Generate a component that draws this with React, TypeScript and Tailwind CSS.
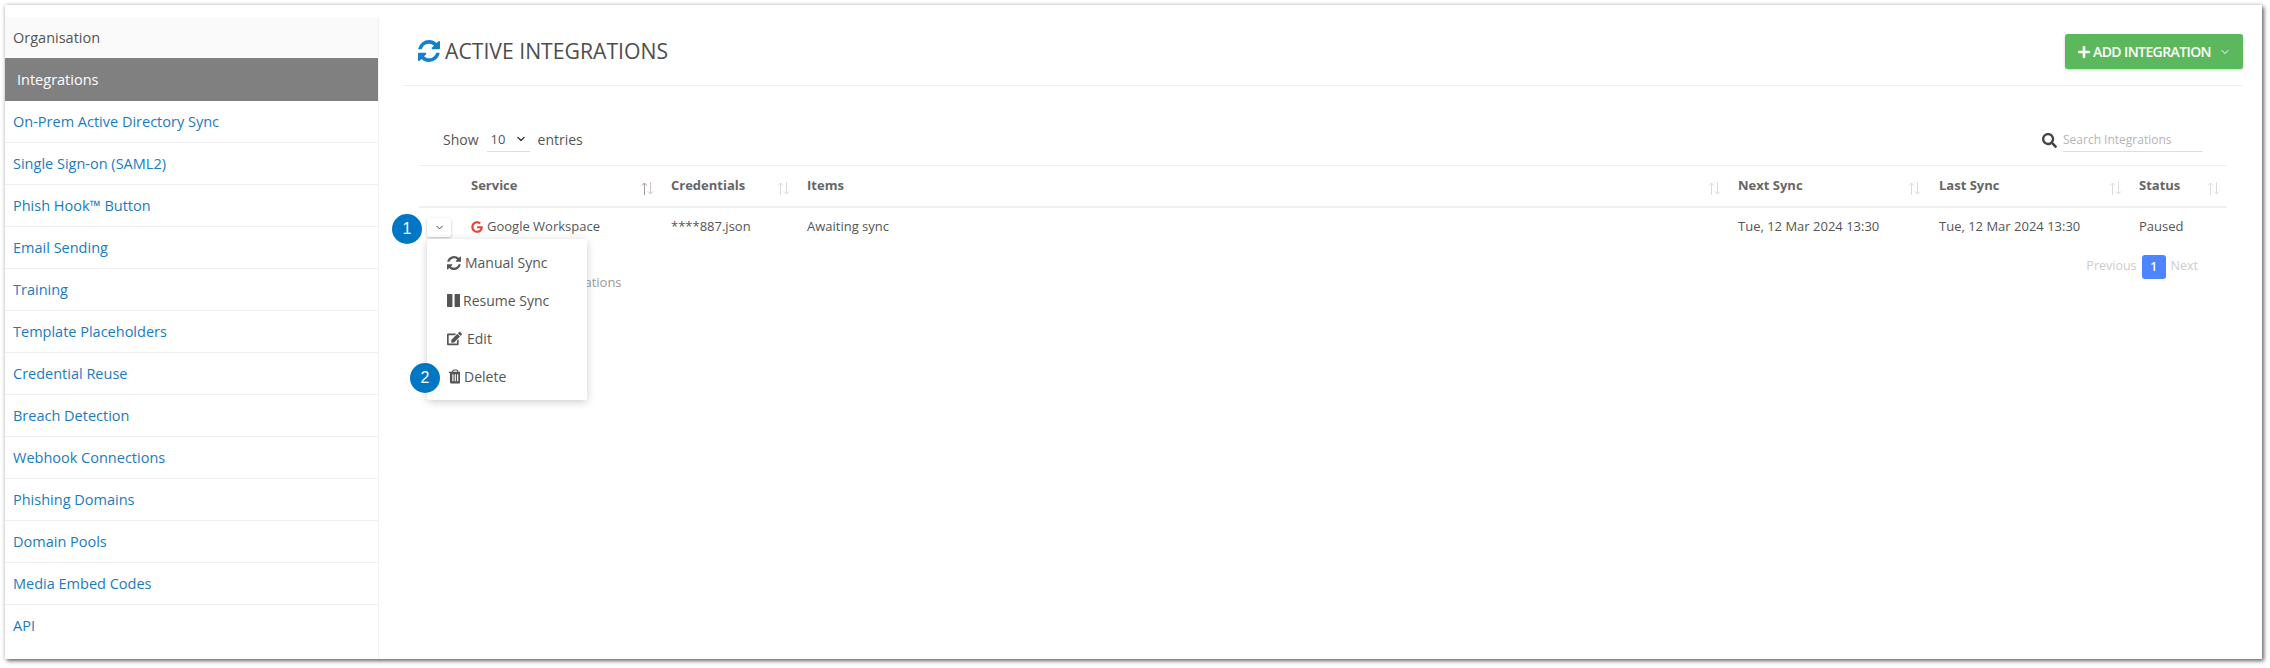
import { ChevronDown } from 'lucide-react';
import { FaEdit, FaGoogle, FaPlus, FaSearch } from 'react-icons/fa';

const settingsLinks = [
  'On-Prem Active Directory Sync',
  'Single Sign-on (SAML2)',
  'Phish Hook™ Button',
  'Email Sending',
  'Training',
  'Template Placeholders',
  'Credential Reuse',
  'Breach Detection',
  'Webhook Connections',
  'Phishing Domains',
  'Domain Pools',
  'Media Embed Codes',
  'API',
];

const RefreshIcon = ({ size, className }: { size: number; className?: string }) => (
  <svg width={size} height={size} viewBox="128 128 1536 1536" fill="currentColor" className={className}>
    <path d="M1639 1056q0 5-1 7-64 268-268 434.5t-478 166.5q-146 0-282.5-55t-243.5-157l-129 129q-19 19-45 19t-45-19-19-45v-448q0-26 19-45t45-19h448q26 0 45 19t19 45-19 45l-137 137q71 66 161 102t187 36q134 0 250-65t186-179q11-17 53-117 8-23 30-23h192q13 0 22.5 9.5t9.5 22.5zm25-800v448q0 26-19 45t-45 19h-448q-26 0-45-19t-19-45 19-45l138-138q-148-137-349-137-134 0-250 65t-186 179q-11 17-53 117-8 23-30 23h-199q-13 0-22.5-9.5t-9.5-22.5v-7q65-268 270-434.5t480-166.5q146 0 284 55.5t245 156.5l130-129q19-19 45-19t45 19 19 45z" />
  </svg>
);

const PauseIcon = () => (
  <svg width="13" height="13" viewBox="128 128 1536 1536" fill="currentColor">
    <path d="M1664 192v1408q0 26-19 45t-45 19h-512q-26 0-45-19t-19-45v-1408q0-26 19-45t45-19h512q26 0 45 19t19 45zm-896 0v1408q0 26-19 45t-45 19h-512q-26 0-45-19t-19-45v-1408q0-26 19-45t45-19h512q26 0 45 19t19 45z" />
  </svg>
);

const TrashIcon = () => (
  <svg width="13" height="15" viewBox="0 128 1408 1536" fill="currentColor">
    <path d="M704 1376v-704q0-14-9-23t-23-9h-64q-14 0-23 9t-9 23v704q0 14 9 23t23 9h64q14 0 23-9t9-23zm256 0v-704q0-14-9-23t-23-9h-64q-14 0-23 9t-9 23v704q0 14 9 23t23 9h64q14 0 23-9t9-23zm256 0v-704q0-14-9-23t-23-9h-64q-14 0-23 9t-9 23v704q0 14 9 23t23 9h64q14 0 23-9t9-23zm-544-992h448l-48-117q-7-9-17-11h-317q-10 2-17 11zm928 32v64q0 14-9 23t-23 9h-96v948q0 83-47 143.5t-113 60.5h-832q-66 0-113-58.5t-47-141.5v-952h-96q-14 0-23-9t-9-23v-64q0-14 9-23t23-9h309l70-167q15-37 54-63t79-26h320q40 0 79 26t54 63l70 167h309q14 0 23 9t9 23z" />
  </svg>
);

const SortIcon = ({ active = false }: { active?: boolean }) => (
  <svg width="13" height="13" viewBox="0 0 13 13" fill="none" strokeWidth="1" className="mt-[5px] shrink-0">
    <path d="M3.5 13V1M1 3.5 3.5 1 6 3.5" stroke={active ? '#a89a9a' : '#dcdcdc'} />
    <path d="M9.5 0v12M7 9.5 9.5 12 12 9.5" stroke={active ? '#c8c8c8' : '#dcdcdc'} />
  </svg>
);

const columns = [
  { label: 'Service', width: 'w-[200px]', pad: 'pr-[17px]', active: true },
  { label: 'Credentials', width: 'w-[136px]', pad: 'pr-[17px]', active: false },
  { label: 'Items', width: 'w-[931px]', pad: 'pr-[17px]', active: false },
  { label: 'Next Sync', width: 'w-[201px]', pad: 'pr-[18px]', active: false },
  { label: 'Last Sync', width: 'w-[200px]', pad: 'pr-[17px]', active: false },
  { label: 'Status', width: 'w-[88px]', pad: 'pr-[7px]', active: false },
];

const Badge = ({ n, className }: { n: number; className: string }) => (
  <span
    className={`absolute z-20 flex h-[30px] w-[30px] items-center justify-center rounded-full bg-[#0077c5] font-['Liberation_Sans',sans-serif] text-[16px] text-white ${className}`}
  >
    {n}
  </span>
);

const menuItems = [
  { label: 'Manual Sync', icon: <RefreshIcon size={14} />, gap: 'gap-[4px]' },
  { label: 'Resume Sync', icon: <PauseIcon />, gap: 'gap-[3px]' },
  { label: 'Edit', icon: <FaEdit size={15} />, gap: 'gap-[5px]' },
  { label: 'Delete', icon: <TrashIcon />, gap: 'gap-[4px]' },
];

export default function App() {
  return (
    <div className="h-[668px] w-[2270px] overflow-hidden bg-white pl-[5px] pt-[5px] font-['Open_Sans',sans-serif]">
      <div className="flex h-[654px] w-[2257px] bg-white shadow-[2px_2px_4px_rgba(0,0,0,0.55),0_0_4px_rgba(0,0,0,0.2)]">
        {/* Settings menu */}
        <aside className="mt-3 w-[374px] shrink-0 border-r border-[#f2f2f2] text-[14.5px]">
          <div className="flex h-[41px] items-center bg-[#fafafa] px-2 text-[#555]">Organisation</div>
          <div className="flex h-[43px] items-center bg-[#808080] px-3 text-white">Integrations</div>
          {settingsLinks.map((link, i) => (
            <a
              key={link}
              href="#"
              className={`flex h-[42px] items-center border-b px-2 text-[#1a7cc0] ${
                i < settingsLinks.length - 1 ? 'border-[#efefef]' : 'border-transparent'
              }`}
            >
              {link}
            </a>
          ))}
        </aside>

        {/* Main panel */}
        <main className="flex-1 pl-[24px] pr-[19px] pt-[29px] text-[13px] text-[#555]">
          <header className="flex h-[52px] items-start justify-between border-b border-[#f0f0f0]">
            <h1 className="ml-[15px] mt-[2px] flex items-center gap-[5px] text-[21.2px] font-normal leading-[30px] text-[#4d4d4d]">
              <RefreshIcon size={22} className="text-[#1480cc]" />
              ACTIVE INTEGRATIONS
            </h1>
            <button className="flex h-[35px] w-[178px] items-center justify-center gap-1 rounded-[3px] bg-[#5cb85c] text-[14px] font-semibold text-white shadow-[0_1px_3px_rgba(0,0,0,0.2)]">
              <span className="flex items-center gap-[2px] whitespace-nowrap tracking-[-0.6px]">
                <FaPlus size={14} />
                ADD INTEGRATION
              </span>
              <ChevronDown size={12} className="ml-1" />
            </button>
          </header>

          <section className="ml-4 w-[1808px]">
            <div className="flex h-[79px] items-end justify-between px-6 pb-[13px] text-[14px]">
              <div className="flex items-center">
                <span className="mb-[2px]">Show</span>
                <span className="relative ml-2 h-[24px] w-[43px] border-b border-[#ddd]">
                  <select className="h-full w-full appearance-none bg-transparent pl-[4px] text-[13px] outline-none">
                    <option>10</option>
                  </select>
                  <ChevronDown size={12} strokeWidth={3} className="absolute right-[3px] top-[5px] text-[#444]" />
                </span>
                <span className="mb-[2px] ml-2">entries</span>
              </div>
              <div className="flex items-center gap-[6px]">
                <FaSearch size={15} className="text-[#444]" />
                <input
                  placeholder="Search Integrations"
                  className="h-[24px] w-[140px] border-b border-[#ddd] text-[12px] outline-none placeholder:text-[#b5b5b5]"
                />
              </div>
            </div>

            <table className="w-[1808px] table-fixed border-collapse">
              <thead>
                <tr className="h-[41px] border-y border-t-[#f0f0f0] border-b-[#f0f0f0] [border-bottom-width:2px]">
                  <th className="w-[52px]" />
                  {columns.map(col => (
                    <th key={col.label} className={`${col.width} ${col.pad} text-left font-bold text-[#666]`}>
                      <div className="flex items-center justify-between">
                        <span>{col.label}</span>
                        <SortIcon active={col.active} />
                      </div>
                    </th>
                  ))}
                </tr>
              </thead>
              <tbody>
                <tr className="h-[39px]">
                  <td className="relative">
                    <Badge n={1} className="left-[-27px] top-[6px]" />
                    <button className="absolute left-2 top-[10px] flex h-[19px] w-6 items-center justify-center rounded-[2px] bg-white text-[#333] shadow-[0_1px_3px_rgba(0,0,0,0.25)]">
                      <ChevronDown size={11} />
                    </button>
                    <div className="absolute left-2 top-[31px] z-10 w-[160px] rounded-[2px] bg-white pb-[4px] pt-[5px] text-[14px] shadow-[0_2px_8px_rgba(0,0,0,0.2)]">
                      {menuItems.map(item => (
                        <div key={item.label} className={`flex h-[38px] items-center px-5 ${item.gap}`}>
                          {item.icon}
                          {item.label}
                        </div>
                      ))}
                      <Badge n={2} className="left-[-17px] top-[124px]" />
                    </div>
                  </td>
                  <td>
                    <span className="flex items-center gap-[4px]">
                      <FaGoogle size={12} className="text-[#ea4335]" />
                      Google Workspace
                    </span>
                  </td>
                  <td>****887.json</td>
                  <td>Awaiting sync</td>
                  <td>Tue, 12 Mar 2024 13:30</td>
                  <td>Tue, 12 Mar 2024 13:30</td>
                  <td>Paused</td>
                </tr>
              </tbody>
            </table>

            <footer className="mt-[9px] flex items-start justify-between pr-[29px] text-[13px]">
              <span className="ml-[11px] mt-[18px] text-[#999]">Showing 1 to 1 of 1 Integrations</span>
              <nav className="flex h-6 items-center text-[12.5px] text-[#ccc]">
                <span>Previous</span>
                <span className="mx-[5px] flex h-6 w-6 items-center justify-center rounded-[3px] bg-[#4d85ff] text-[12px] font-semibold text-white">
                  1
                </span>
                <span>Next</span>
              </nav>
            </footer>
          </section>
        </main>
      </div>
    </div>
  );
}
